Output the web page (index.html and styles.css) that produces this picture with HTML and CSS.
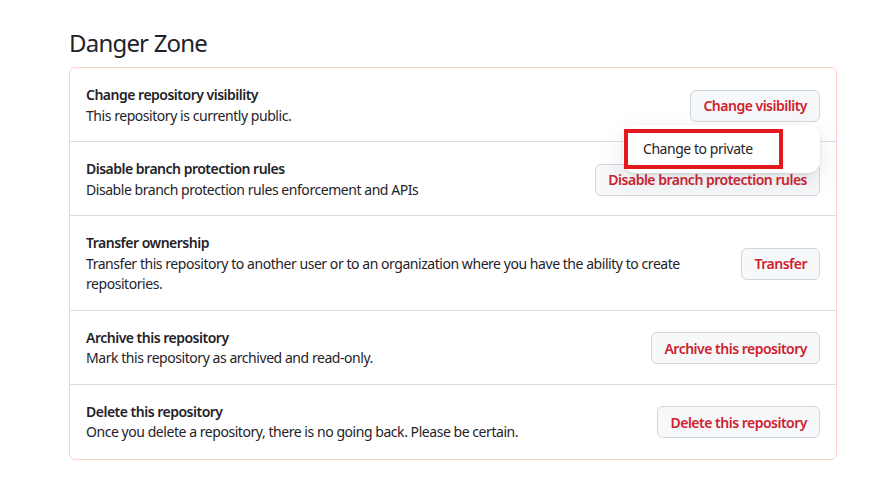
FILE: index.html
```html
<!DOCTYPE html>
<html lang="en">
<head>
  <meta charset="UTF-8" />
  <meta name="viewport" content="width=device-width, initial-scale=1" />
  <title>Settings · Danger Zone</title>
  <link rel="stylesheet" href="styles.css">
</head>
<body>
  <div class="container">
    <h2 class="zone-title">Danger Zone</h2>

    <div class="danger-box">
      <div class="danger-row">
        <div class="row-text">
          <strong>Change repository visibility</strong>
          <p>This repository is currently public.</p>
        </div>
        <div class="menu-anchor">
          <button class="btn-danger">Change visibility</button>
          <div class="menu">
            <div class="menu-item">Change to private</div>
            <span class="mark"></span>
          </div>
        </div>
      </div>

      <div class="danger-row">
        <div class="row-text">
          <strong>Disable branch protection rules</strong>
          <p>Disable branch protection rules enforcement and APIs</p>
        </div>
        <button class="btn-danger">Disable branch protection rules</button>
      </div>

      <div class="danger-row">
        <div class="row-text">
          <strong>Transfer ownership</strong>
          <p>Transfer this repository to another user or to an organization where you have the ability to create repositories.</p>
        </div>
        <button class="btn-danger">Transfer</button>
      </div>

      <div class="danger-row">
        <div class="row-text">
          <strong>Archive this repository</strong>
          <p>Mark this repository as archived and read-only.</p>
        </div>
        <button class="btn-danger">Archive this repository</button>
      </div>

      <div class="danger-row">
        <div class="row-text">
          <strong>Delete this repository</strong>
          <p>Once you delete a repository, there is no going back. Please be certain.</p>
        </div>
        <button class="btn-danger">Delete this repository</button>
      </div>
    </div>
  </div>
</body>
</html>
```

FILE: styles.css
```css
html, body {
  margin: 0;
  padding: 0;
  font-family: 'Noto Sans', 'Open Sans', sans-serif;
  font-size: 14px;
  line-height: 20.5px;
  letter-spacing: -0.45px;
  background: #ffffff;
  color: #1f2328;
}

.container {
  width: 768px;
  margin-left: 69px;
  padding-top: 28px;
}

.zone-title {
  font-size: 24px;
  line-height: 30px;
  font-weight: 400;
  letter-spacing: -0.8px;
  margin: 0 0 9px;
}

.danger-box {
  border: 1px solid #ffcecb;
  border-radius: 6px;
}

.danger-row {
  display: flex;
  align-items: center;
  gap: 16px;
  padding: 17px 16px 15px;
}

.danger-row:last-child {
  padding-bottom: 16px;
}

.danger-row + .danger-row {
  border-top: 1px solid #d8dee4;
}

.row-text {
  flex: 1;
}

.row-text strong {
  display: block;
  font-weight: 600;
  letter-spacing: -0.5px;
}

.row-text p {
  margin: 0;
}

.btn-danger {
  height: 32px;
  padding: 0 12px;
  font-family: inherit;
  font-size: 14px;
  font-weight: 600;
  letter-spacing: -0.5px;
  color: #cf222e;
  background: #f6f8fa;
  border: 1px solid #d0d7de;
  border-radius: 6px;
  white-space: nowrap;
  cursor: pointer;
}

/* dropdown under "Change visibility" */
.menu-anchor {
  position: relative;
}

.menu {
  position: absolute;
  top: calc(100% + 3px);
  right: 0;
  width: 197px;
  padding: 8px;
  box-sizing: border-box;
  background: #fff;
  border-radius: 12px;
  box-shadow: 0 1px 3px rgba(31, 35, 40, 0.12), 0 8px 24px rgba(66, 74, 83, 0.12);
  z-index: 2;
}

.menu-item {
  height: 32px;
  line-height: 32px;
  padding: 0 12px;
  color: #1f2328;
}

.mark {
  position: absolute;
  left: 1px;
  top: 4px;
  width: 159px;
  height: 40px;
  box-sizing: border-box;
  border: 4px solid #e3191e;
}
```
